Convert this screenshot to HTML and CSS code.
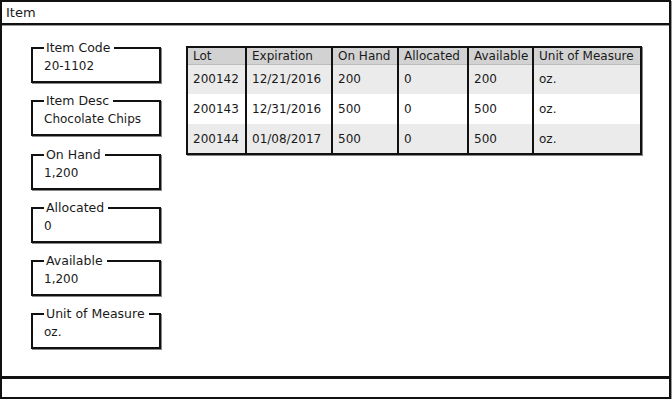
FILE: index.html
```html
<!doctype html>
<html lang="en">
<head>
    <meta charset="UTF-8">
    <title>Item</title>
    <link rel="stylesheet" href="styles.css">
</head>
<body>
    <div class="window">
        <div class="titlebar">Item</div>
        <div class="content">
            <div class="fields">
                <fieldset class="field"><legend>Item Code</legend><span>20-1102</span></fieldset>
                <fieldset class="field"><legend>Item Desc</legend><span>Chocolate Chips</span></fieldset>
                <fieldset class="field"><legend>On Hand</legend><span>1,200</span></fieldset>
                <fieldset class="field"><legend>Allocated</legend><span>0</span></fieldset>
                <fieldset class="field"><legend>Available</legend><span>1,200</span></fieldset>
                <fieldset class="field"><legend>Unit of Measure</legend><span>oz.</span></fieldset>
            </div>
            <table class="lots">
                <thead>
                    <tr>
                        <th class="c-lot">Lot</th>
                        <th class="c-exp">Expiration</th>
                        <th class="c-hand">On Hand</th>
                        <th class="c-alloc">Allocated</th>
                        <th class="c-avail">Available</th>
                        <th class="c-unit">Unit of Measure</th>
                    </tr>
                </thead>
                <tbody>
                    <tr><td>200142</td><td>12/21/2016</td><td>200</td><td>0</td><td>200</td><td>oz.</td></tr>
                    <tr><td>200143</td><td>12/31/2016</td><td>500</td><td>0</td><td>500</td><td>oz.</td></tr>
                    <tr><td>200144</td><td>01/08/2017</td><td>500</td><td>0</td><td>500</td><td>oz.</td></tr>
                </tbody>
            </table>
        </div>
        <div class="footer"></div>
    </div>
</body>
</html>
```

FILE: styles.css
```css
* {
    margin: 0;
    padding: 0;
    box-sizing: border-box;
}
body {
    font-family: "DejaVu Sans", sans-serif;
    font-size: 12px;
    color: #1a1a1a;
    background: #fff;
}
.window {
    width: 671px;
    height: 399px;
    border: 2px solid #111;
    display: flex;
    flex-direction: column;
    box-shadow: 1px 1px 0 #999;
}
.titlebar {
    height: 23px;
    padding: 3px 4px 0;
    border-bottom: 2px solid #111;
    box-shadow: 0 1px 0 #999;
    font-size: 13px;
}
.content {
    flex: 1;
    display: flex;
    align-items: flex-start;
    padding: 15px 0 0 29px;
}
.fields {
    display: flex;
    flex-direction: column;
    gap: 10.3px;
}
.field {
    width: 130px;
    height: 43px;
    border: 2px solid #111;
    box-shadow: 1px 1px 0 #888;
    padding: 0 0 0 11px;
}
.field legend {
    margin-left: 0;
    padding: 0 4px 0 2px;
    font-size: 12.5px;
    line-height: 16px;
}
.field span {
    display: block;
    line-height: 14px;
    margin-top: 3px;
}
.lots {
    margin: 6px 0 0 25px;
    border-collapse: collapse;
    border: 2px solid #111;
    box-shadow: 1px 1px 0 #888;
    table-layout: fixed;
    width: 454px;
}
.lots th, .lots td {
    border-left: 2px solid #111;
    padding: 0 0 0 5px;
    text-align: left;
    font-weight: normal;
    white-space: nowrap;
}
.lots th {
    height: 17px;
    background: #d2d2d2;
    border-bottom: 1px solid #bbb;
}
.lots td {
    height: 30px;
}
.lots tbody tr:nth-child(odd) {
    background: #ebebeb;
}
.c-lot { width: 59px; }
.c-exp { width: 86px; }
.c-hand { width: 66px; }
.c-alloc { width: 70px; }
.c-avail { width: 65px; }
.c-unit { width: 108px; }
.footer {
    height: 21px;
    border-top: 3px solid #111;
}
```
